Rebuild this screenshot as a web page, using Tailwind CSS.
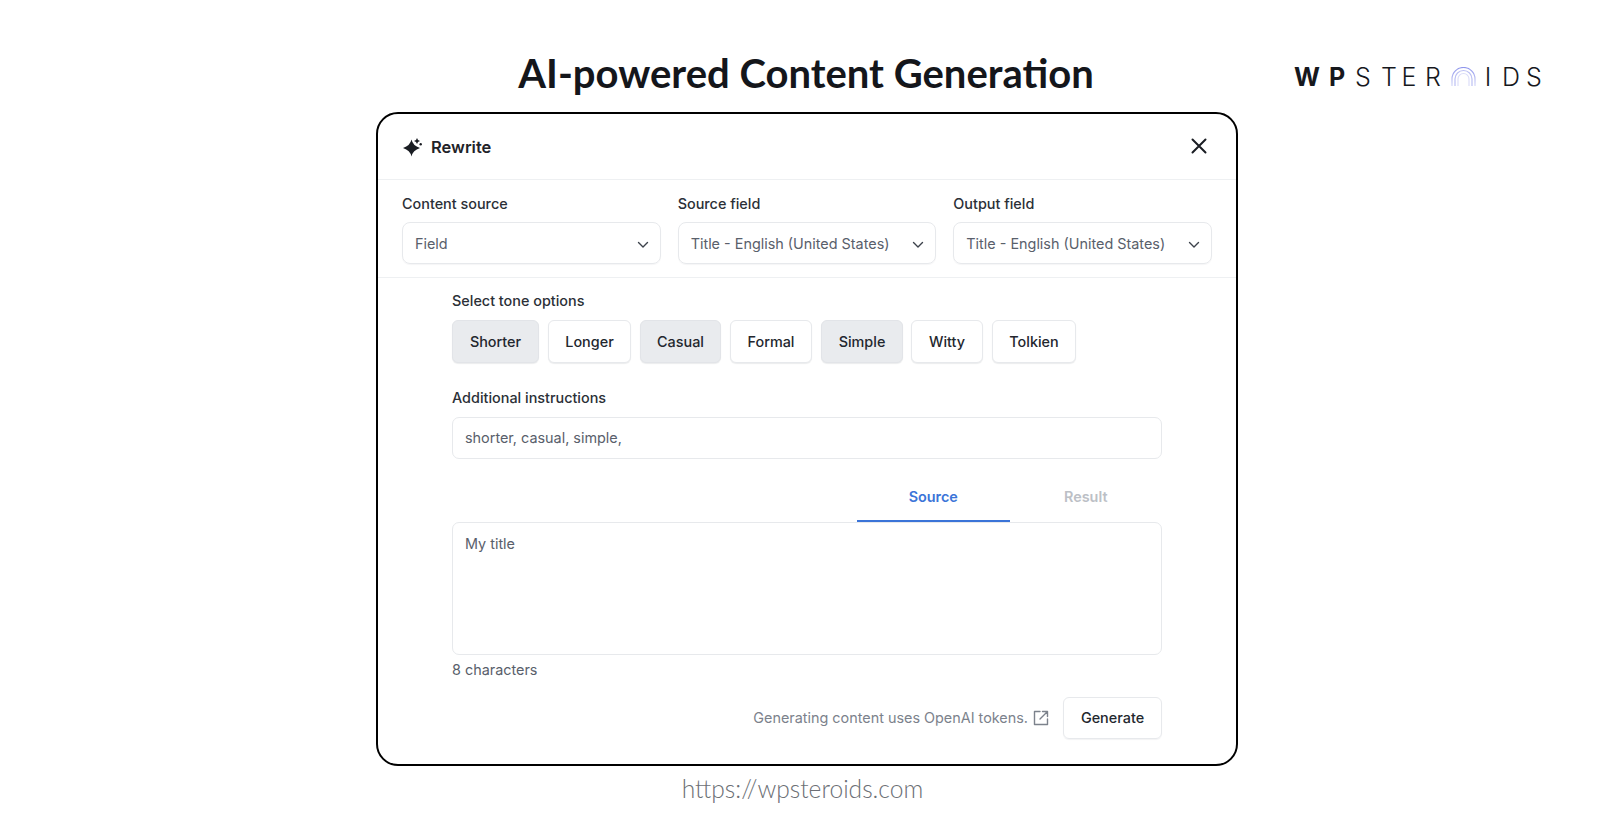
<!doctype html>
<html lang="en">
<head>
<meta charset="utf-8">
<title>AI-powered Content Generation</title>
<script src="https://cdn.jsdelivr.net/npm/@tailwindcss/browser@4"></script>
</head>
<body class="bg-white">
<div class="relative w-[1612px] h-[818px] overflow-hidden bg-white font-['Inter',sans-serif] text-[#1d2127]">
  <h1 class="h-[112px] pt-[45px] text-center font-['Lato',sans-serif] font-bold text-[40px] leading-[56px] text-[#14161b]">AI-powered Content Generation</h1>

  <div class="absolute left-[1295px] top-[62px] flex items-center h-[30px] font-['Inter',sans-serif] text-[25px] leading-[30px] text-[#16181d]">
    <span class="w-[24px] flex justify-center font-bold">W</span>
    <span class="ml-[6px] w-[24px] flex justify-center font-bold">P</span>
    <span class="ml-[2px] w-[24px] flex justify-center font-light">S</span>
    <span class="ml-[2px] w-[24px] flex justify-center font-light">T</span>
    <span class="-ml-[4px] w-[24px] flex justify-center font-light">E</span>
    <span class="w-[24px] flex justify-center font-light">R</span>
    <svg class="ml-[6px]" width="25" height="20" viewBox="0 0 25 20" fill="none" stroke-width="1.200">
      <defs><linearGradient id="arc" x1="0" y1="0" x2="0" y2="1"><stop offset="0" stop-color="#8f96ec"/><stop offset="1" stop-color="#d6d9f8"/></linearGradient></defs>
      <path d="M1 19v-7a11.500 11.500 0 0 1 23 0v7" stroke="url(#arc)"/>
      <path d="M4 19v-7a8.500 8.500 0 0 1 17 0v7" stroke="#bcc0f3"/>
      <path d="M7 19v-7a5.500 5.500 0 0 1 11 0v7" stroke="#dcdef8"/>
    </svg>
    <span class="w-[24px] flex justify-center font-light">I</span>
    <span class="-ml-[1px] w-[24px] flex justify-center font-light">D</span>
    <span class="-ml-[1px] w-[24px] flex justify-center font-light">S</span>
  </div>

  <main class="ml-[376px] w-[862px] h-[654px] rounded-[22px] border-2 border-black bg-white">
    <header class="h-[66px] px-6 flex items-center justify-between border-b border-[#eef0f2]">
      <div class="flex items-center gap-[8px]">
        <svg width="21" height="21" viewBox="0 0 21 21" fill="#1a1d23"><path d="M9.500 3.500 Q10.800 9.700 18 12 Q10.800 14.300 9.500 20.500 Q8.200 14.300 1 12 Q8.200 9.700 9.500 3.500Z"/><path d="M15 2 Q15.500 4.500 18 5 Q15.500 5.500 15 8 Q14.500 5.500 12 5 Q14.500 4.500 15 2Z"/><circle cx="18.700" cy="8.300" r="1.200"/></svg>
        <span class="text-[16.500px] leading-6 font-semibold text-[#1f2329]">Rewrite</span>
      </div>
      <svg class="mr-[3px] -mt-[1px]" width="20" height="20" viewBox="0 0 20 20" fill="none" stroke="#1a1d23" stroke-width="2" stroke-linecap="round"><path d="M3.500 3.500l13 13M16.500 3.500l-13 13"/></svg>
    </header>

    <section class="h-[98px] px-6 pt-[14px] grid grid-cols-3 gap-x-[17px] border-b border-[#eef0f2]">
      <div>
        <div class="h-[27px] -mt-[1px] text-[14.400px] leading-[22px] font-medium text-[#2b3037]">Content source</div>
        <div class="mt-[2px] h-[42px] pt-[2px] pl-[12px] pr-[10px] flex items-center justify-between rounded-[8px] border border-[#e7e9ec] text-[14.400px] text-[#59606b] shadow-[0_1px_1px_rgba(16,24,40,0.04)]">
          <span>Field</span>
          <svg width="14" height="14" viewBox="0 0 14 14" fill="none" stroke="#3c424b" stroke-width="1.400" stroke-linecap="round" stroke-linejoin="round"><path d="M2.500 5.500l4.500 4.500 4.500-4.500"/></svg>
        </div>
      </div>
      <div>
        <div class="h-[27px] -mt-[1px] text-[14.400px] leading-[22px] font-medium text-[#2b3037]">Source field</div>
        <div class="mt-[2px] h-[42px] pt-[2px] pl-[12px] pr-[10px] flex items-center justify-between rounded-[8px] border border-[#e7e9ec] text-[14.400px] text-[#59606b] shadow-[0_1px_1px_rgba(16,24,40,0.04)]">
          <span>Title - English (United States)</span>
          <svg width="14" height="14" viewBox="0 0 14 14" fill="none" stroke="#3c424b" stroke-width="1.400" stroke-linecap="round" stroke-linejoin="round"><path d="M2.500 5.500l4.500 4.500 4.500-4.500"/></svg>
        </div>
      </div>
      <div>
        <div class="h-[27px] -mt-[1px] text-[14.400px] leading-[22px] font-medium text-[#2b3037]">Output field</div>
        <div class="mt-[2px] h-[42px] pt-[2px] pl-[12px] pr-[10px] flex items-center justify-between rounded-[8px] border border-[#e7e9ec] text-[14.400px] text-[#59606b] shadow-[0_1px_1px_rgba(16,24,40,0.04)]">
          <span>Title - English (United States)</span>
          <svg width="14" height="14" viewBox="0 0 14 14" fill="none" stroke="#3c424b" stroke-width="1.400" stroke-linecap="round" stroke-linejoin="round"><path d="M2.500 5.500l4.500 4.500 4.500-4.500"/></svg>
        </div>
      </div>
    </section>

    <section class="px-[74px] pt-[12px]">
      <div class="h-[30px] text-[14.400px] leading-[22px] font-medium text-[#2b3037]">Select tone options</div>
      <div class="flex gap-[9px] h-[43px] text-[14.400px] font-medium text-[#23272e]">
        <span class="w-[87px] flex items-center justify-center rounded-[6px] bg-[#e9ebee] border border-[#e2e4e8] shadow-[0_1px_1px_rgba(16,24,40,0.08)]">Shorter</span>
        <span class="w-[83px] flex items-center justify-center rounded-[6px] bg-white border border-[#e7e9ec] shadow-[0_1px_1px_rgba(16,24,40,0.08)]">Longer</span>
        <span class="w-[81px] flex items-center justify-center rounded-[6px] bg-[#e9ebee] border border-[#e2e4e8] shadow-[0_1px_1px_rgba(16,24,40,0.08)]">Casual</span>
        <span class="w-[82px] flex items-center justify-center rounded-[6px] bg-white border border-[#e7e9ec] shadow-[0_1px_1px_rgba(16,24,40,0.08)]">Formal</span>
        <span class="w-[82px] flex items-center justify-center rounded-[6px] bg-[#e9ebee] border border-[#e2e4e8] shadow-[0_1px_1px_rgba(16,24,40,0.08)]">Simple</span>
        <span class="-ml-[1px] w-[72px] flex items-center justify-center rounded-[6px] bg-white border border-[#e7e9ec] shadow-[0_1px_1px_rgba(16,24,40,0.08)]">Witty</span>
        <span class="w-[84px] flex items-center justify-center rounded-[6px] bg-white border border-[#e7e9ec] shadow-[0_1px_1px_rgba(16,24,40,0.08)]">Tolkien</span>
      </div>

      <div class="mt-[24px] h-[30px] text-[14.400px] leading-[22px] font-medium text-[#2b3037]">Additional instructions</div>
      <div class="h-[42px] pl-[12px] flex items-center rounded-[7px] border border-[#e7e9ec] text-[14.400px] text-[#59606b]">shorter, casual, simple,</div>

      <div class="mt-[22px] ml-[405px] h-[41px] grid grid-cols-2 text-[14.400px] font-semibold">
        <span class="flex items-center justify-center pb-[8px] text-[#3b74d8] border-b-2 border-[#3b74d8]">Source</span>
        <span class="flex items-center justify-center pb-[8px] text-[#bcc0c6] border-b-2 border-transparent">Result</span>
      </div>
      <div class="h-[133px] pl-[12px] pt-[10px] rounded-[7px] border border-[#e7e9ec] text-[14.400px] leading-[22px] text-[#59606b]">My title</div>
      <div class="mt-[4px] h-[22px] text-[14.400px] leading-[22px] text-[#59606b]">8 characters</div>

      <div class="mt-[16px] flex items-center justify-end">
        <span class="text-[14.400px] text-[#7c828c]">Generating content uses OpenAI tokens.</span>
        <svg class="ml-[5px]" width="16" height="16" viewBox="0 0 16 16" fill="none" stroke="#7c828c" stroke-width="1.400" stroke-linecap="round" stroke-linejoin="round"><path d="M7 1.500H1.500v13h13V9M9.500 1.500h5v5M14.500 1.500L7 9"/></svg>
        <span class="ml-[14px] w-[99px] h-[42px] flex items-center justify-center rounded-[6px] border border-[#e7e9ec] text-[14.400px] font-medium text-[#23272e] shadow-[0_1px_1px_rgba(16,24,40,0.05)]">Generate</span>
      </div>
    </section>
  </main>

  <div class="mt-[6px] pr-[7px] text-center font-['Lato',sans-serif] font-light text-[24.600px] leading-[34px] text-[#6c6f75]">https://wpsteroids.com</div>
</div>
</body>
</html>
